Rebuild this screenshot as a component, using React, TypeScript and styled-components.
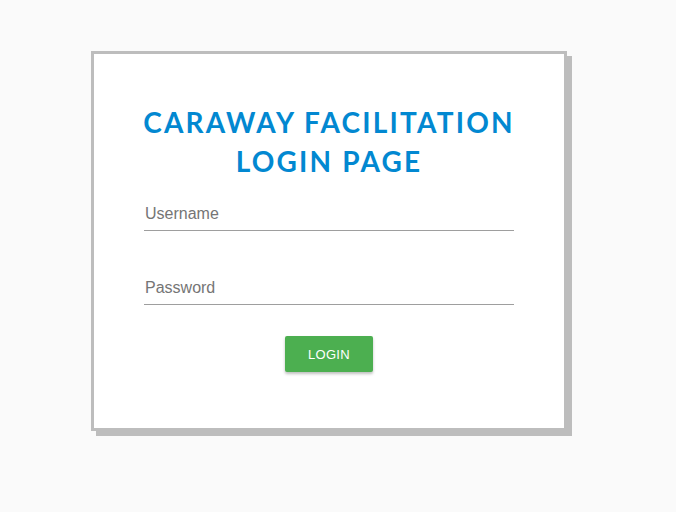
import React from "react";
import styled, { createGlobalStyle } from "styled-components";

const Global = createGlobalStyle`
  html, body { margin: 0; padding: 0; background: #fafafa; }
  body { font-family: "Liberation Sans", Arial, sans-serif; }
`;

const Page = styled.div`
  width: 676px;
  height: 512px;
  display: flex;
  align-items: flex-start;
  padding: 51px 0 0 91px;
  box-sizing: border-box;
`;

const Card = styled.form`
  width: 476px;
  height: 380px;
  box-sizing: border-box;
  background: #ffffff;
  border: 3px solid #bdbdbd;
  box-shadow: 5px 5px 0 #bdbdbd;
  display: flex;
  flex-direction: column;
  align-items: center;
  padding-top: 49px;
`;

const Title = styled.h1`
  margin: 0;
  font-family: Lato, "Noto Sans", sans-serif;
  font-weight: 700;
  font-size: 28px;
  line-height: 39px;
  letter-spacing: 2.2px;
  color: #0288d1;
  text-align: center;
`;

const Field = styled.input<{ $top: number }>`
  width: 370px;
  box-sizing: border-box;
  border: none;
  border-bottom: 1px solid #9e9e9e;
  background: transparent;
  outline: none;
  font-family: "Liberation Sans", Arial, sans-serif;
  font-size: 16px;
  height: 30px;
  padding: 0 1px 4px;
  color: #212121;
  margin-top: ${(p) => p.$top}px;
  &::placeholder { color: #757575; }
`;

const Button = styled.button`
  margin-top: 31px;
  width: 88px;
  height: 36px;
  border: none;
  border-radius: 2px;
  background: #4caf50;
  color: #ffffff;
  font-family: "Liberation Sans", Arial, sans-serif;
  font-size: 13px;
  letter-spacing: 0.3px;
  box-shadow: 0 2px 3px rgba(0, 0, 0, 0.25);
  cursor: pointer;
`;

export default function App() {
  return (
    <>
      <Global />
      <Page>
        <Card onSubmit={(e) => e.preventDefault()}>
          <Title>
            CARAWAY FACILITATION
            <br />
            LOGIN PAGE
          </Title>
          <Field $top={20} placeholder="Username" />
          <Field $top={44} type="password" placeholder="Password" />
          <Button type="submit">LOGIN</Button>
        </Card>
      </Page>
    </>
  );
}
